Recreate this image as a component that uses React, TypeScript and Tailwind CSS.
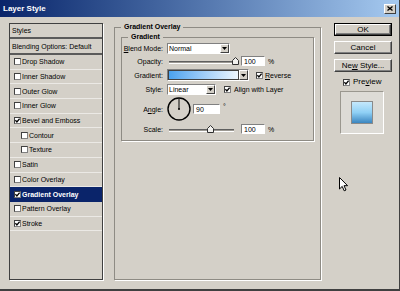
import React from "react";

type Item = { name: string; checked?: boolean; indent?: boolean; active?: boolean };

const items: Item[] = [
  { name: "Drop Shadow" },
  { name: "Inner Shadow" },
  { name: "Outer Glow" },
  { name: "Inner Glow" },
  { name: "Bevel and Emboss", checked: true },
  { name: "Contour", indent: true },
  { name: "Texture", indent: true },
  { name: "Satin" },
  { name: "Color Overlay" },
  { name: "Gradient Overlay", checked: true, active: true },
  { name: "Pattern Overlay" },
  { name: "Stroke", checked: true },
];

function Box({ checked }: { checked?: boolean }) {
  return (
    <span className="flex h-[7px] w-[7px] shrink-0 items-center justify-center border border-t-[#404040] border-l-[#404040] border-r-[#808080] border-b-[#808080] bg-white">
      {checked && (
        <svg width="5" height="5" viewBox="0 0 5 5" className="block">
          <path d="M0.4 2.2 L1.9 3.9 L4.6 0.6" fill="none" stroke="#000" strokeWidth="1.3" />
        </svg>
      )}
    </span>
  );
}

function Arrow() {
  return (
    <span className="flex h-full w-[9px] shrink-0 items-center justify-center border border-t-white border-l-white border-r-[#404040] border-b-[#404040] bg-[#d4d0c8]">
      <svg width="5" height="3" viewBox="0 0 5 3" className="block">
        <path d="M0 0 H5 L2.5 3 Z" fill="#000" />
      </svg>
    </span>
  );
}

function Select({ value, w }: { value: string; w: string }) {
  return (
    <div className={`flex h-[11px] ${w} border border-t-[#808080] border-l-[#808080] border-r-white border-b-white bg-white`}>
      <span className="flex flex-1 items-center pl-[1px]">{value}</span>
      <Arrow />
    </div>
  );
}

function Field({ value, w = "w-[24px]" }: { value: string; w?: string }) {
  return (
    <div className={`flex h-[10px] ${w} items-center border border-t-[#808080] border-l-[#808080] border-r-white border-b-white bg-white pl-[2px]`}>
      {value}
    </div>
  );
}

function Slider({ thumb }: { thumb: string }) {
  return (
    <div className="relative h-[10px] w-[69px]">
      <div className="absolute left-[2px] right-[2px] top-[5px] h-[3px] border-t border-t-[#5f5f5f] border-b border-b-white bg-[#9c9993]" />
      <svg width="7" height="8" viewBox="0 0 7 8" className={`absolute top-[1px] ${thumb}`}>
        <path d="M3.5 0.5 L6.5 3.5 V7.5 H0.5 V3.5 Z" fill="#f2f1ee" stroke="#303030" strokeWidth="1" />
      </svg>
    </div>
  );
}

function Btn({ children }: { children: React.ReactNode }) {
  return (
    <div className="flex h-full w-full items-center justify-center border border-t-white border-l-white border-r-[#404040] border-b-[#404040] bg-[#d4d0c8] text-[8px] shadow-[inset_-1px_-1px_0_#808080]">
      <span>{children}</span>
    </div>
  );
}

export default function App() {
  return (
    <div className="relative h-[291px] w-[400px] overflow-hidden border-r border-b-2 border-[#404040] bg-[#d4d0c8] font-['Liberation_Sans',Arial,sans-serif] text-[7px] leading-none text-black">
      <div className="flex h-[17px] items-center justify-between bg-linear-to-r from-[#0a246a] to-[#a6caf0] px-[3px]">
        <span className="text-[8px] font-bold text-white">Layer Style</span>
        <div className="flex h-[10px] w-[12px] items-center justify-center border border-t-white border-l-white border-r-[#404040] border-b-[#404040] bg-[#d4d0c8]">
          <svg width="6" height="5" viewBox="0 0 6 5" className="block">
            <path d="M0.5 0.5 L5.5 4.5 M5.5 0.5 L0.5 4.5" stroke="#000" strokeWidth="1.3" />
          </svg>
        </div>
      </div>

      <div className="flex pt-[6px]">
        {/* styles list */}
        <div className="ml-[9px] flex h-[257px] w-[94px] flex-col border border-[#404040] shadow-[1px_1px_0_#fff]">
          <div className="flex h-[15px] items-center border-b-2 border-[#5a5a5a] pl-[2px]">Styles</div>
          <div className="flex h-[16px] items-center border-b-2 border-[#5a5a5a] pl-[2px]">Blending Options: Default</div>
          {items.map(it => (
            <div
              key={it.name}
              className={`flex h-[14.7px] items-center gap-[1px] border-b ${it.indent ? "pl-[11px]" : "pl-[4px]"} ${
                it.active ? "border-[#0a246a] bg-[#0a246a] font-bold text-white" : "border-[#ebe9e5]"
              }`}
            >
              <Box checked={it.checked} />
              <span>{it.name}</span>
            </div>
          ))}
        </div>

        {/* gradient overlay */}
        <fieldset className="ml-[11px] h-[257px] w-[206px] border border-[#8e8b84] px-[6px] shadow-[1px_1px_0_#fff]">
          <legend className="px-[3px] text-[7px] leading-[8px] font-bold">Gradient Overlay</legend>
          <fieldset className="mt-[2px] h-[108px] w-[193px] border border-[#8e8b84] shadow-[1px_1px_0_#fff]">
            <legend className="ml-[6px] px-[3px] leading-[8px] font-bold">Gradient</legend>
            <div className="grid grid-cols-[41px_1fr] grid-rows-[12px_14px_14px_14px_26px_14px] items-center gap-x-[4px] pt-[1px]">
              <span className="text-right"><u>B</u>lend Mode:</span>
              <Select value="Normal" w="w-[63px]" />

              <span className="text-right">Opacity:</span>
              <div className="flex items-center">
                <Slider thumb="left-[65px]" />
                <div className="ml-[5px]"><Field value="100" /></div>
                <span className="ml-[3px]">%</span>
              </div>

              <span className="text-right">Gradient:</span>
              <div className="flex items-center">
                <div className="flex h-[12px] w-[82px] border border-t-[#808080] border-l-[#808080] border-r-white border-b-white">
                  <div className="flex-1 border border-[#404040] bg-linear-to-r from-[#4aa2ee] to-[#ecf6fe]" />
                  <Arrow />
                </div>
                <div className="ml-[7px]"><Box checked /></div>
                <span className="ml-[2px]"><u>R</u>everse</span>
              </div>

              <span className="text-right">Style:</span>
              <div className="flex items-center">
                <Select value="Linear" w="w-[49px]" />
                <div className="ml-[8px]"><Box checked /></div>
                <span className="ml-[3px]">Align with Layer</span>
              </div>

              <span className="text-right">A<u>n</u>gle:</span>
              <div className="flex items-center">
                <svg width="24" height="24" viewBox="0 0 24 24" className="block">
                  <circle cx="12" cy="12" r="11" fill="none" stroke="#000" strokeWidth="1.4" />
                  <path d="M12 12 V1.5" stroke="#000" strokeWidth="1" />
                  <circle cx="12" cy="12" r="1" fill="#000" />
                </svg>
                <div className="ml-[2px]"><Field value="90" w="w-[27px]" /></div>
                <span className="ml-[3px] self-start pt-[6px]">°</span>
              </div>

              <span className="text-right">Scale:</span>
              <div className="flex items-center">
                <Slider thumb="left-[40px]" />
                <div className="ml-[5px]"><Field value="100" /></div>
                <span className="ml-[3px]">%</span>
              </div>
            </div>
          </fieldset>
        </fieldset>

        {/* buttons */}
        <div className="ml-[13px] flex w-[58px] flex-col">
          <div className="h-[13px] border border-black">
            <Btn>OK</Btn>
          </div>
          <div className="mt-[5px] h-[13px]">
            <Btn>Cancel</Btn>
          </div>
          <div className="mt-[5px] h-[13px]">
            <Btn>Ne<u>w</u> Style...</Btn>
          </div>
          <div className="mt-[6px] flex h-[8px] items-center pl-[9px] text-[8px]">
            <Box checked />
            <span className="ml-[3px]">Pre<u>v</u>iew</span>
          </div>
          <div className="mt-[5px] ml-[6px] flex h-[43px] w-[44px] items-center justify-center border border-t-[#9a978f] border-l-[#9a978f] border-r-white border-b-white bg-[#dddbd6]">
            <div className="h-[23px] w-[22px] border border-[#8a8a8a] bg-linear-to-b from-[#c4e8fc] via-[#8fd0f5] to-[#3a86c0]" />
          </div>
        </div>
      </div>

      <svg width="10" height="15" viewBox="0 0 10 15" className="absolute left-[339px] top-[177px]">
        <path d="M0.5 0.5 V12 L3.2 9.4 L5.2 13.8 L7 13 L5 8.7 H8.6 Z" fill="#fff" stroke="#000" strokeWidth="1" strokeLinejoin="round" />
      </svg>
    </div>
  );
}
